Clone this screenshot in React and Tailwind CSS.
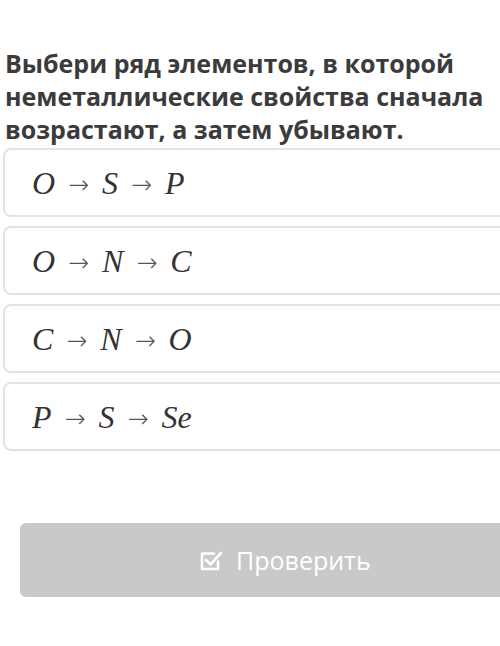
import React from "react";

const options = [
  ["O", "S", "P"],
  ["O", "N", "C"],
  ["C", "N", "O"],
  ["P", "S", "Se"],
];

function Formula({ parts }) {
  return (
    <div className="flex items-center gap-[13px] text-[32px] italic text-[#333]" style={{ fontFamily: '"Liberation Serif", "DejaVu Serif", serif' }}>
      {parts.map((p, i) => (
        <React.Fragment key={i}>
          {i > 0 && (
            <span className="not-italic font-extralight text-[25px] text-[#555] leading-none translate-y-[2px]" style={{ fontFamily: '"DejaVu Sans", sans-serif' }}>→</span>
          )}
          <span>{p}</span>
        </React.Fragment>
      ))}
    </div>
  );
}

export default function App() {
  return (
    <div className="w-[500px] h-[646px] overflow-hidden bg-white" style={{ fontFamily: '"Open Sans", "Noto Sans", sans-serif' }}>
      <div className="pt-[47px] pl-[5px]">
        <h1 className="text-[25px] font-bold leading-[33px] text-[#3b3b3b] w-[500px]">
          Выбери ряд элементов, в которой неметаллические свойства сначала возрастают, а затем убывают.
        </h1>
      </div>

      <div className="mt-[2px] ml-[3px] flex flex-col gap-[9px] w-[520px]">
        {options.map((o, i) => (
          <div key={i} className="h-[69px] rounded-[8px] border-2 border-[#e3e3e3] bg-white flex items-center pl-[27px]">
            <Formula parts={o} />
          </div>
        ))}
      </div>

      <div className="mt-[72px] ml-[20px] w-[500px] h-[74px] rounded-[6px] bg-[#c9c9c9] flex items-center pl-[180px] gap-[13px] text-white">
        <svg width="23" height="21" viewBox="0 0 23 21" fill="none" stroke="white" strokeWidth="2.6" strokeLinecap="round" strokeLinejoin="round">
          <path d="M18 11.5v7.5H2V3.5h12" />
          <path d="M6 10l4.5 4.5L21 3" />
        </svg>
        <span className="text-[25px] leading-none">Проверить</span>
      </div>
    </div>
  );
}
